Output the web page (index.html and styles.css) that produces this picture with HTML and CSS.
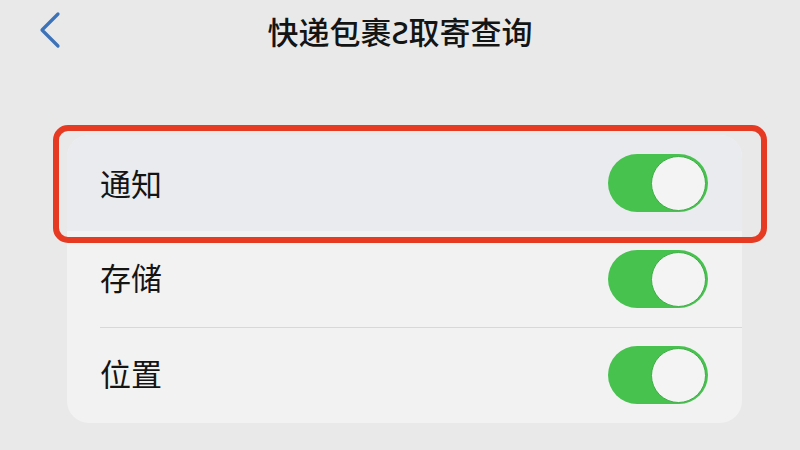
FILE: index.html
```html
<!DOCTYPE html>
<html lang="zh-CN">
<head>
<meta charset="UTF-8">
<meta name="viewport" content="width=device-width, initial-scale=1.0">
<title>快递包裹取寄查询</title>
<link rel="stylesheet" href="styles.css">
</head>
<body>

<div class="navbar">
    <a class="back" href="#">
        <svg width="24" height="38" viewBox="0 0 24 38">
            <polyline points="20,3 4,19 20,35" fill="none" stroke="#3b72b8" stroke-width="3.2" stroke-linecap="round" stroke-linejoin="round"/>
        </svg>
    </a>
    <div class="title">快递包裹Ƨ取寄查询</div>
</div>

<div class="settings">
    <div class="card">
        <div class="row highlighted">
            <span class="label">通知</span>
            <span class="switch on"><span class="knob"></span></span>
        </div>
        <div class="row">
            <span class="label">存储</span>
            <span class="switch on"><span class="knob"></span></span>
        </div>
        <div class="row">
            <span class="label">位置</span>
            <span class="switch on"><span class="knob"></span></span>
        </div>
    </div>
    <div class="mark"></div>
</div>

</body>
</html>
```

FILE: styles.css
```css
body {
    margin: 0;
    background-color: #e9e9e9;
    font-family: "Noto Sans CJK SC", "Noto Sans", sans-serif;
    color: #141414;
}

.navbar {
    position: relative;
    height: 66px;
    display: flex;
    align-items: center;
    justify-content: center;
}

.back {
    position: absolute;
    left: 38px;
    top: 11px;
    display: block;
}

.title {
    font-size: 31px;
    font-weight: 500;
    margin-top: -6px;
}

.settings {
    position: relative;
    padding: 69px 0 0 67px;
}

.card {
    width: 675px;
    background-color: #f2f2f2;
    border-radius: 22px;
    overflow: hidden;
}

.row {
    height: 96px;
    display: flex;
    align-items: center;
    justify-content: space-between;
    padding: 0 34px 0 33px;
    position: relative;
}

.row + .row::before {
    content: "";
    position: absolute;
    top: 0;
    left: 33px;
    right: 0;
    border-top: 1px solid #d8d8d8;
}

.row.highlighted {
    background-color: #eaebef;
}

.row.highlighted + .row::before {
    display: none;
}

.label {
    font-size: 31px;
    margin-bottom: 6px;
}

.row.highlighted .label {
    margin-bottom: 2px;
}

.switch {
    width: 100px;
    height: 58px;
    border-radius: 29px;
    background-color: #47c24f;
    display: flex;
    align-items: center;
    justify-content: flex-end;
    box-sizing: border-box;
    padding-right: 2px;
}

.knob {
    width: 53px;
    height: 53px;
    border-radius: 50%;
    background-color: #f4f4f4;
    border: 1px solid #3fae46;
}

/* red outline around the first row */
.mark {
    position: absolute;
    left: 53px;
    top: 59px;
    width: 714px;
    height: 118px;
    box-sizing: border-box;
    border: 6px solid #e63b22;
    border-radius: 15px;
}
```
